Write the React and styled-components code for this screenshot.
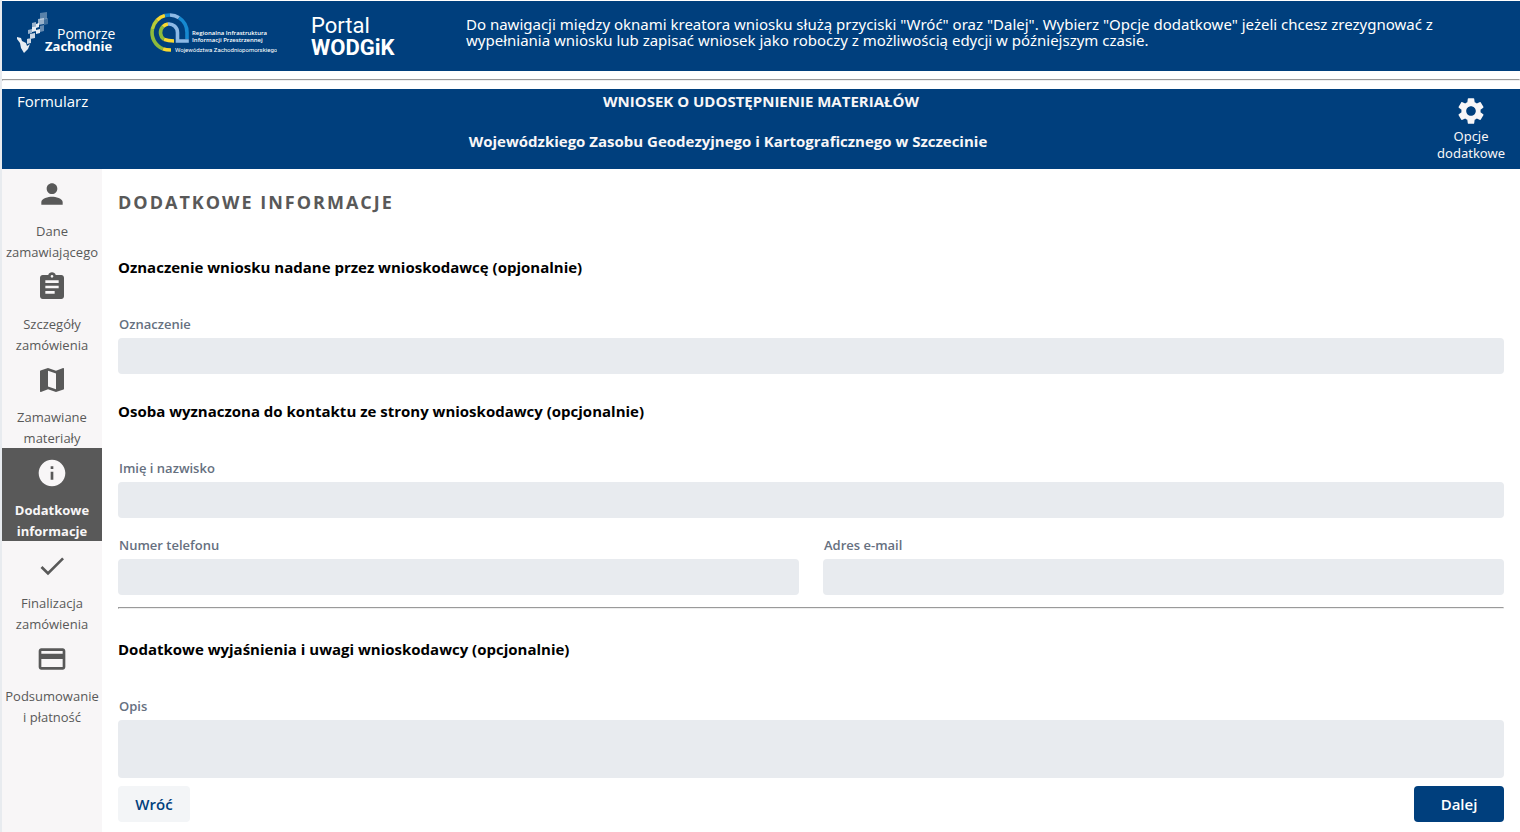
import React from "react";
import styled, { createGlobalStyle } from "styled-components";
import {
  MdAssignment,
  MdCheck,
  MdCreditCard,
  MdInfo,
  MdMap,
  MdPerson,
  MdSettings,
} from "react-icons/md";

const steps = [
  { icon: MdPerson, lines: ["Dane", "zamawiającego"] },
  { icon: MdAssignment, lines: ["Szczegóły", "zamówienia"] },
  { icon: MdMap, lines: ["Zamawiane", "materiały"] },
  { icon: MdInfo, lines: ["Dodatkowe", "informacje"], active: true },
  { icon: MdCheck, lines: ["Finalizacja", "zamówienia"] },
  { icon: MdCreditCard, lines: ["Podsumowanie", "i płatność"] },
];

const PomorzeLogo = () => (
  <svg width="100" height="44" viewBox="0 0 100 44" role="img" aria-label="Pomorze Zachodnie">
    <g fill="#fff">
      <path d="M23 1l7-1v7l-7 1z" opacity=".35" />
      <path d="M21 7l6-1v6l-6 1z" opacity=".6" />
      <path d="M27 7l4-1v6l-4 1z" opacity=".25" />
      <path d="M15 11l4-1v4l-4 1zM11 18l4-1v4l-4 1z" opacity=".6" />
      <path d="M15 15l4-1v5l-4 1zM19 12l3-1v4l-3 1zM19 18l4-1v4l-4 1z" opacity=".9" />
      <path d="M23 14l4-1v6l-4 1z" opacity=".4" />
      <path d="M13 22l5-1v5l-5 1zM10 27l4-1v5l-4 1z" opacity=".8" />
      <path d="M0 25l4 1 1 3 4 2 1 3 3-2-2 5-4 4-3-5-1-5-3-4z" opacity=".9" />
    </g>
    <LogoText x="40" y="27" $size={14}>Pomorze</LogoText>
    <LogoText x="28" y="39" $size={13} $weight={700}>Zachodnie</LogoText>
  </svg>
);

const RiipLogo = () => (
  <svg width="128" height="44" viewBox="0 0 128 44" role="img" aria-label="Regionalna Infrastruktura Informacji Przestrzennej">
    <g fill="none" strokeWidth="3.6">
      <path d="M14 36.800A17.500 17.500 0 0 1 3.400 17" stroke="#8cba3c" />
      <path d="M3.400 17A17.500 17.500 0 0 1 8 8.300" stroke="#b5cb38" />
      <path d="M8 8.300A17.500 17.500 0 0 1 16 3.600" stroke="#f8d830" />
      <path d="M16 3.600A17.500 17.500 0 0 1 21 3" stroke="#1689d0" />
      <path d="M21 3A17.500 17.500 0 0 1 30 5.800" stroke="#8db9e5" />
      <path d="M30 5.800A17.500 17.500 0 0 1 38 20.500V27" stroke="#1689d0" />
      <path d="M14 36.800Q17 38 22 38" stroke="#f8d830" />
      <path d="M15 27.400A8.500 8.500 0 0 1 14 14.500" stroke="#8cba3c" />
      <path d="M14 14.500A8.500 8.500 0 0 1 19 12" stroke="#f8d830" />
      <path d="M15 27.400Q19 29 25 29" stroke="#f8d830" />
      <path d="M19 12A8.500 8.500 0 0 1 28.500 20.500V29H39.800" stroke="#8db9e5" />
    </g>
    <LogoText x="43" y="23" $size={6} $weight={600}>Regionalna Infrastruktura</LogoText>
    <LogoText x="43" y="30" $size={6} $weight={600}>Informacji Przestrzennej</LogoText>
    <LogoText x="26" y="40" $size={6} $font="Roboto">Województwa Zachodniopomorskiego</LogoText>
  </svg>
);

const TextField = ({ id, label, type = "text" }) => (
  <Field>
    <label htmlFor={id}>{label}</label>
    <input id={id} type={type} />
  </Field>
);

const App = () => {
  return (
    <Page>
      <GlobalStyle />
      <TopBar>
        <Logos>
          <PomorzeLogo />
          <RiipLogo />
          <PortalName>
            Portal
            <strong>WODGiK</strong>
          </PortalName>
        </Logos>
        <Hint>
          Do nawigacji między oknami kreatora wniosku służą przyciski "Wróć"
          oraz "Dalej". Wybierz "Opcje dodatkowe" jeżeli chcesz zrezygnować z
          wypełniania wniosku lub zapisać wniosek jako roboczy z możliwością
          edycji w późniejszym czasie.
        </Hint>
      </TopBar>
      <Separator />
      <Header>
        <span>Formularz</span>
        <Title>
          <h1>WNIOSEK O UDOSTĘPNIENIE MATERIAŁÓW</h1>
          <h2>
            Wojewódzkiego Zasobu Geodezyjnego i Kartograficznego w Szczecinie
          </h2>
        </Title>
        <Options type="button">
          <MdSettings />
          <span>Opcje</span>
          <span>dodatkowe</span>
        </Options>
      </Header>
      <Body>
        <Sidebar>
          {steps.map(({ icon: Icon, lines, active }) => (
            <Step href="#" key={lines.join(" ")} $active={active}>
              <Icon />
              <span>{lines[0]}</span>
              <span>{lines[1]}</span>
            </Step>
          ))}
        </Sidebar>
        <Form onSubmit={(e) => e.preventDefault()}>
          <FormTitle>DODATKOWE INFORMACJE</FormTitle>
          <SectionTitle>
            Oznaczenie wniosku nadane przez wnioskodawcę (opjonalnie)
          </SectionTitle>
          <TextField id="oznaczenie" label="Oznaczenie" />
          <SectionTitle>
            Osoba wyznaczona do kontaktu ze strony wnioskodawcy (opcjonalnie)
          </SectionTitle>
          <TextField id="imie" label="Imię i nazwisko" />
          <Columns>
            <TextField id="telefon" label="Numer telefonu" type="tel" />
            <TextField id="email" label="Adres e-mail" type="email" />
          </Columns>
          <Line />
          <SectionTitle>
            Dodatkowe wyjaśnienia i uwagi wnioskodawcy (opcjonalnie)
          </SectionTitle>
          <Field>
            <label htmlFor="opis">Opis</label>
            <textarea id="opis" />
          </Field>
          <Actions>
            <Button type="button">Wróć</Button>
            <Button type="submit" $primary>
              Dalej
            </Button>
          </Actions>
        </Form>
      </Body>
    </Page>
  );
};

const GlobalStyle = createGlobalStyle`
  * {
    box-sizing: border-box;
    margin: 0;
    padding: 0;
  }
  body {
    background: #fff;
    font-family: "Open Sans", "Noto Sans", sans-serif;
    font-size: 15px;
  }
  button, input, textarea {
    border: none;
    font-family: inherit;
  }
`;

const Page = styled.div`
  display: flex;
  flex-direction: column;
  min-height: 100vh;
  padding-top: 1px;
  border-left: 2px solid #e8ebef;
`;

const TopBar = styled.header`
  display: flex;
  height: 70px;
  background: #003f7d;
  color: #fff;
`;

const Logos = styled.div`
  display: flex;
  flex: none;
  align-items: flex-start;
  width: 464px;
  padding: 11px 0 0 15px;
  gap: 32px;
`;

const LogoText = styled.text`
  fill: #fff;
  font-family: "${(props) => props.$font || "Open Sans"}", sans-serif;
  font-size: ${(props) => props.$size}px;
  font-weight: ${(props) => props.$weight || 400};
`;

const PortalName = styled.div`
  padding: 3px 0 0 2px;
  font-family: Roboto, sans-serif;
  font-size: 22px;
  line-height: 22px;

  strong {
    display: block;
  }
`;

const Hint = styled.p`
  flex: 1;
  max-width: 1000px;
  padding-top: 15px;
  font-family: "Noto Sans", sans-serif;
  line-height: 16px;
`;

const Separator = styled.hr`
  margin: 8px 0;
  border: 1px inset #eee;
`;

const Header = styled.div`
  display: grid;
  grid-template-columns: 300px 1fr 300px;
  height: 80px;
  padding: 0 15px;
  background: #003f7d;
  color: #fff;
  line-height: 25px;
`;

const Title = styled.div`
  color: #f8f6f7;
  text-align: center;

  h1,
  h2 {
    font-size: 15px;
    font-weight: 700;
    line-height: 25px;
  }
  h2 {
    margin-top: 15px;
    padding-right: 66px;
  }
`;

const Options = styled.button`
  display: flex;
  flex-direction: column;
  align-items: center;
  justify-self: end;
  padding-top: 6px;
  background: none;
  color: #f8f6f7;
  font-family: "Noto Sans", sans-serif;
  font-size: 13px;
  line-height: 17px;

  svg {
    width: 32px;
    height: 32px;
    margin-bottom: 1px;
  }
`;

const Body = styled.div`
  display: flex;
  flex: 1;
`;

const Sidebar = styled.nav`
  flex: none;
  width: 100px;
  background: #f8f6f7;
`;

const Step = styled.a`
  display: flex;
  flex-direction: column;
  align-items: center;
  height: 93px;
  padding-top: 9px;
  background: ${(props) => (props.$active ? "#595959" : "none")};
  color: ${(props) => (props.$active ? "#f8f6f7" : "#595959")};
  font-size: 13px;
  font-weight: ${(props) => (props.$active ? 700 : 400)};
  line-height: 21px;
  text-decoration: none;

  svg {
    flex: none;
    width: 32px;
    height: 32px;
    margin-bottom: 11px;
  }
`;

const Form = styled.form`
  flex: 1;
  padding: 16px 16px 10px;
`;

const FormTitle = styled.h2`
  margin-bottom: 11px;
  color: #595959;
  font-size: 18px;
  letter-spacing: 2px;
  line-height: 34px;
`;

const SectionTitle = styled.h3`
  padding: 25px 0 36px;
  color: #000;
  font-size: 15px;
  line-height: 24px;
`;

const Field = styled.div`
  display: flex;
  flex-direction: column;

  label {
    margin-bottom: 5px;
    padding-left: 1px;
    color: #66707f;
    font-size: 13px;
    font-weight: 600;
    line-height: 18px;
  }
  input,
  textarea {
    width: 100%;
    height: 36px;
    padding: 0 8px;
    border-radius: 4px;
    background: #e8ebef;
    resize: none;
  }
  textarea {
    height: 58px;
  }
`;

const Columns = styled.div`
  display: grid;
  grid-template-columns: 1fr 1fr;
  gap: 24px;
  margin-top: 18px;
`;

const Line = styled.hr`
  margin: 12px 0 3px;
  border: 1px inset #eee;
`;

const Actions = styled.div`
  display: flex;
  justify-content: space-between;
  margin-top: 8px;
`;

const Button = styled.button`
  min-width: ${(props) => (props.$primary ? 90 : 72)}px;
  height: 36px;
  border-radius: 4px;
  background: ${(props) => (props.$primary ? "#003f7d" : "#f3f5f7")};
  color: ${(props) => (props.$primary ? "#fff" : "#003f7d")};
  font-size: 15px;
  font-weight: 600;
`;

export default App;
